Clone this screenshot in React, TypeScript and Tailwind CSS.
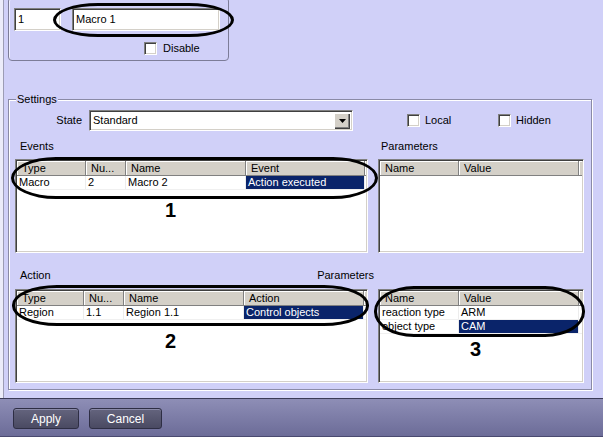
import React from "react";

type Col = { label: string; w: string };
type Cell = { text: string; sel?: boolean };

function Checkbox() {
  return (
    <div className="w-[13px] h-[13px] shrink-0 bg-white border border-t-[#808080] border-l-[#808080] border-b-white border-r-white shadow-[inset_1px_1px_0_#404040,inset_-1px_-1px_0_#d4d0c8]" />
  );
}

function ListBox({ cls, cols, rows }: { cls: string; cols: Col[]; rows: Cell[][] }) {
  return (
    <div
      className={`${cls} shrink-0 bg-white border border-t-[#808080] border-l-[#808080] border-b-white border-r-white shadow-[inset_1px_1px_0_#404040,inset_-1px_-1px_0_#d4d0c8] p-px overflow-hidden`}
    >
      <div className="flex h-[15px]">
        {cols.map((c, i) => (
          <div
            key={i}
            className={`${c.w} shrink-0 bg-[#d4d0c8] border-r border-b border-[#808080] shadow-[inset_1px_1px_0_#fff] pl-[5px] leading-[14px] whitespace-nowrap overflow-hidden`}
          >
            {c.label}
          </div>
        ))}
        <div className="flex-1 bg-[#d4d0c8] border-b border-[#808080] shadow-[inset_1px_1px_0_#fff]" />
      </div>
      {rows.map((r, ri) => (
        <div key={ri} className="flex h-[14px] border-b border-[#f0f0f0]">
          {r.map((cell, i) => (
            <div
              key={i}
              className={`${cols[i].w} shrink-0 leading-[13px] pl-[2px] whitespace-nowrap overflow-hidden border-r border-[#ececec] ${
                cell.sel ? "bg-[#0a246a] text-white" : ""
              }`}
            >
              {cell.text}
            </div>
          ))}
        </div>
      ))}
    </div>
  );
}

const eventCols: Col[] = [
  { label: "Type", w: "w-[69px]" },
  { label: "Nu...", w: "w-[40px]" },
  { label: "Name", w: "w-[120px]" },
  { label: "Event", w: "w-[119px]" },
];
const actionCols: Col[] = [
  { label: "Type", w: "w-[67px]" },
  { label: "Nu...", w: "w-[40px]" },
  { label: "Name", w: "w-[120px]" },
  { label: "Action", w: "w-[120px]" },
];
const paramCols: Col[] = [
  { label: "Name", w: "w-[79px]" },
  { label: "Value", w: "w-[120px]" },
];

export default function App() {
  return (
    <div className="relative w-[603px] h-[437px] overflow-hidden flex flex-col bg-[#d0d0f8] text-black text-[11px] font-['Liberation_Sans',Arial,sans-serif]">
      <div className="flex-1 flex min-h-0">
        <div className="w-[3px] bg-[#ececfa]" />
        <div className="w-px bg-[#9c9cb4]" />
        <div className="flex-1 flex flex-col">
          {/* top box */}
          <div className="ml-[4px] mt-[-3px] w-[221px] h-[64px] shrink-0 border border-[#7c7c98] rounded-[4px] shadow-[inset_1px_1px_0_#eeeeff] pt-[10px] pl-[5px]">
            <div className="flex">
              <div className="w-[47px] h-[23px] bg-white border border-t-[#808080] border-l-[#808080] border-b-white border-r-white shadow-[inset_1px_1px_0_#404040,inset_-1px_-1px_0_#d4d0c8] pl-[3px] leading-[20px]">
                1
              </div>
              <div className="ml-[11px] w-[148px] h-[23px] bg-white border border-t-[#808080] border-l-[#808080] border-b-white border-r-white shadow-[inset_1px_1px_0_#404040,inset_-1px_-1px_0_#d4d0c8] pl-[3px] leading-[20px]">
                Macro 1
              </div>
            </div>
            <div className="flex items-center mt-[11px] ml-[130px] gap-[6px]">
              <Checkbox />
              <span className="leading-[13px]">Disable</span>
            </div>
          </div>

          {/* settings group */}
          <div className="relative ml-[4px] mt-[38px] w-[584px] h-[291px] shrink-0 border border-[#8a8aa6] shadow-[inset_1px_1px_0_#fff,1px_1px_0_#fff]">
            <span className="absolute left-[7px] top-[-7px] px-[1px] bg-[#d0d0f8] leading-[13px]">Settings</span>

            <div className="flex items-center pt-[10px]">
              <div className="w-[73px] text-right">State</div>
              <div className="ml-[7px] w-[264px] h-[21px] flex items-center bg-white border border-t-[#808080] border-l-[#808080] border-b-white border-r-white shadow-[inset_1px_1px_0_#404040,inset_-1px_-1px_0_#d4d0c8] pl-[3px] pr-[2px]">
                <span className="flex-1">Standard</span>
                <div className="w-[16px] h-[16px] bg-[#d4d0c8] shadow-[inset_1px_1px_0_#fff,inset_-1px_-1px_0_#404040,inset_-2px_-2px_0_#808080] flex items-center justify-center">
                  <svg width="7" height="4" viewBox="0 0 7 4">
                    <path d="M0 0H7L3.5 4Z" fill="#000" />
                  </svg>
                </div>
              </div>
              <div className="ml-[54px] w-[91px] flex items-center gap-[5px]">
                <Checkbox />
                <span>Local</span>
              </div>
              <div className="flex items-center gap-[5px]">
                <Checkbox />
                <span>Hidden</span>
              </div>
            </div>

            <div className="ml-[6px] flex flex-col">
              <div className="flex mt-[9px] leading-[13px]">
                <div className="w-[353px] pl-[5px]">Events</div>
                <div className="ml-[10px] pl-[3px]">Parameters</div>
              </div>
              <div className="flex gap-[10px] mt-[6px]">
                <ListBox
                  cls="w-[353px] h-[94px]"
                  cols={eventCols}
                  rows={[[{ text: "Macro" }, { text: "2" }, { text: "Macro 2" }, { text: "Action executed", sel: true }]]}
                />
                <ListBox cls="w-[206px] h-[94px]" cols={paramCols} rows={[]} />
              </div>

              <div className="flex justify-between w-[359px] mt-[16px] pl-[5px] leading-[13px]">
                <span>Action</span>
                <span>Parameters</span>
              </div>
              <div className="flex gap-[10px] mt-[7px]">
                <ListBox
                  cls="w-[353px] h-[94px]"
                  cols={actionCols}
                  rows={[[{ text: "Region" }, { text: "1.1" }, { text: "Region 1.1" }, { text: "Control objects", sel: true }]]}
                />
                <ListBox
                  cls="w-[206px] h-[94px]"
                  cols={paramCols}
                  rows={[
                    [{ text: "reaction type" }, { text: "ARM" }],
                    [{ text: "object type" }, { text: "CAM", sel: true }],
                  ]}
                />
              </div>
            </div>
          </div>
        </div>
      </div>

      {/* bottom bar */}
      <div className="h-[39px] shrink-0 border-t border-[#3a3a58] border-b border-b-[#4a4a70] bg-linear-to-b from-[#8e8eb6] to-[#6c6c98] flex items-start pt-[9px] pl-[13px] gap-[10px]">
        <button className="w-[66px] h-[21px] rounded-[3px] border border-[#2e2e44] bg-linear-to-b from-[#64647e] to-[#4a4a62] shadow-[inset_0_1px_0_#8a8aa8] text-white text-[12px] leading-[18px]">
          Apply
        </button>
        <button className="w-[73px] h-[21px] rounded-[3px] border border-[#2e2e44] bg-linear-to-b from-[#64647e] to-[#4a4a62] shadow-[inset_0_1px_0_#8a8aa8] text-white text-[12px] leading-[18px]">
          Cancel
        </button>
      </div>

      {/* annotations */}
      <div className="pointer-events-none absolute left-[53px] top-[3px] w-[181px] h-[34px] rounded-[45px/17px] border-[3px] border-black" />
      <div className="pointer-events-none absolute left-[11px] top-[157px] w-[367px] h-[42px] rounded-[45px/21px] border-[3px] border-black" />
      <div className="pointer-events-none absolute left-[12px] top-[285px] w-[357px] h-[41px] rounded-[45px/20px] border-[3px] border-black" />
      <div className="pointer-events-none absolute left-[374px] top-[286px] w-[211px] h-[51px] rounded-[40px/25px] border-[3px] border-black" />
      <span className="pointer-events-none absolute left-[165px] top-[199px] text-[20px] font-bold leading-[22px]">1</span>
      <span className="pointer-events-none absolute left-[165px] top-[330px] text-[20px] font-bold leading-[22px]">2</span>
      <span className="pointer-events-none absolute left-[470px] top-[338px] text-[20px] font-bold leading-[22px]">3</span>
    </div>
  );
}
